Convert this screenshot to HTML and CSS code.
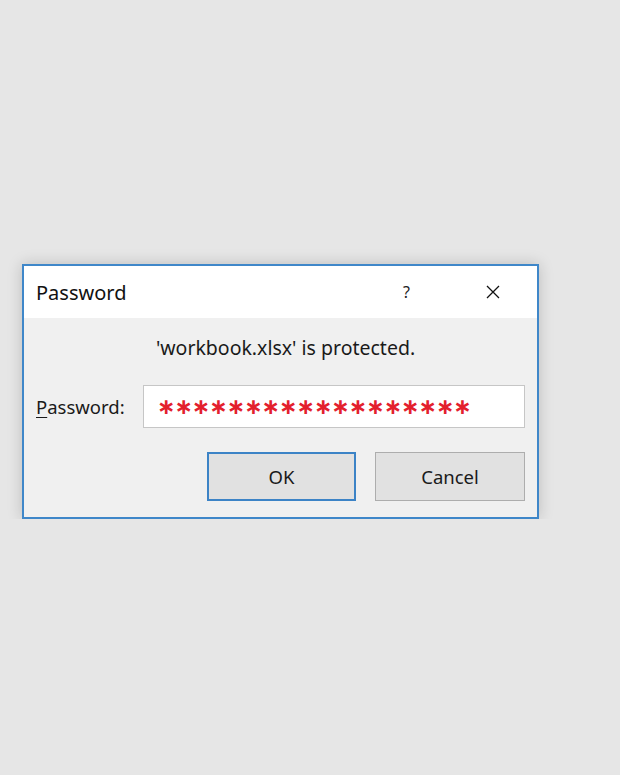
FILE: index.html
```html
<!DOCTYPE html>
<html lang="en">
<head>
  <meta charset="UTF-8">
  <title>Password</title>
  <link rel="stylesheet" href="styles.css">
</head>
<body>
  <div class="dialog">
    <div class="titlebar">
      <span class="title">Password</span>
      <span class="help">?</span>
      <span class="close">
        <svg width="14" height="14" viewBox="0 0 14 14">
          <path d="M1 1 L13 13 M13 1 L1 13" stroke="#111" stroke-width="1.3" fill="none"/>
        </svg>
      </span>
    </div>

    <div class="content">
      <p class="message">'workbook.xlsx' is protected.</p>

      <div class="field">
        <label class="label"><u>P</u>assword:</label>
        <div class="input"><span class="stars">∗∗∗∗∗∗∗∗∗∗∗∗∗∗∗∗∗∗</span></div>
      </div>

      <div class="buttons">
        <button class="btn btn-default">OK</button>
        <button class="btn">Cancel</button>
      </div>
    </div>
  </div>
</body>
</html>
```

FILE: styles.css
```css
body {
  margin: 0;
  padding: 0;
  background: #e6e6e6;
  font-family: 'Noto Sans', 'Open Sans', sans-serif;
  color: #1a1a1a;
}

.dialog {
  box-sizing: border-box;
  width: 517px;
  height: 255px;
  margin: 264px 0 0 22px;
  border: 2px solid #3f87c9;
  background: #f0f0f0;
  box-shadow: 0 0 14px rgba(0,0,0,0.18);
}

.titlebar {
  height: 52px;
  background: #fff;
  display: flex;
  align-items: center;
  padding-left: 12px;
}

.title {
  font-size: 20px;
  flex: 1;
  color: #111;
}

.help {
  font-size: 16px;
  width: 14px;
  margin-right: 69px;
  color: #222;
}

.close {
  width: 14px;
  height: 14px;
  margin-right: 37px;
  display: flex;
}

.content {
  padding: 18px 12px 0 12px;
}

.message {
  margin: 0;
  font-size: 19.5px;
  line-height: 24px;
  text-align: center;
  padding-left: 10px;
}

.field {
  display: flex;
  align-items: center;
  margin-top: 25px;
}

.label {
  flex-shrink: 0;
  width: 107px;
  font-size: 18.5px;
}

.label u {
  text-underline-offset: 3px;
}

.input {
  flex: 1;
  min-width: 0;
  overflow: hidden;
  box-sizing: border-box;
  height: 43px;
  background: #fff;
  border: 1px solid #c6c6c6;
  display: flex;
  align-items: center;
  padding-left: 13px;
}

.stars {
  color: #e3202d;
  font-family: 'DejaVu Sans', sans-serif;
  font-weight: bold;
  font-size: 22px;
  letter-spacing: -1px;
  white-space: nowrap;
}

.buttons {
  display: flex;
  justify-content: flex-end;
  gap: 19px;
  margin-top: 24px;
}

.btn {
  box-sizing: border-box;
  width: 150px;
  height: 49px;
  background: #e1e1e1;
  border: 1px solid #adadad;
  font-family: 'Noto Sans', 'Open Sans', sans-serif;
  font-size: 18.5px;
  color: #1a1a1a;
  padding: 0;
}

.btn-default {
  width: 149px;
  border: 2px solid #3c83c6;
}
```
